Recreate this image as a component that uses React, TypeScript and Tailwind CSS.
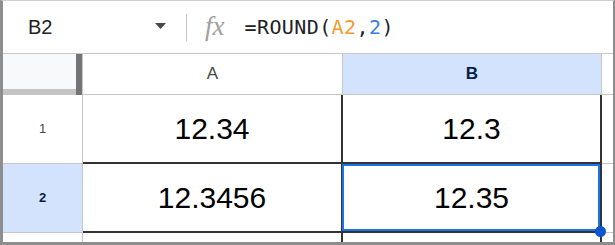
import React from 'react'

const FONT = { fontFamily: '"Liberation Sans", Arial, sans-serif' }

function FormulaBar() {
  return (
    <div className="flex h-[53px] items-center border-b border-[#c7c7c7] bg-white">
      <div className="flex w-[183px] items-center pl-[25px] pr-[20px]">
        <span className="text-[20px] leading-none text-[#202124]">B2</span>
        <svg className="ml-auto mt-[-3px]" width="11" height="6" viewBox="0 0 11 6">
          <path d="M0 0 L11 0 L5.5 6 Z" fill="#444746" />
        </svg>
      </div>
      <div className="h-[27px] w-px bg-[#c4c7c5]" />
      <span
        className="ml-[18px] mt-[-2px] text-[27px] italic leading-none text-[#a0a0a0]"
        style={{ fontFamily: '"Liberation Serif", "Times New Roman", serif' }}
      >
        fx
      </span>
      <span
        className="ml-[20px] text-[20px] leading-none tracking-[0.4px] text-[#202124]"
        style={{ fontFamily: '"DejaVu Sans Mono", monospace' }}
      >
        =ROUND(<span className="text-[#f29b2f]">A2</span>,<span className="text-[#3a7ee4]">2</span>)
      </span>
    </div>
  )
}

function HeaderRow() {
  return (
    <div className="flex h-[41px] border-b border-[#c7c7c7]">
      <div className="flex h-[41px] w-[80px] border-r border-[#c7c7c7]">
        <div className="flex flex-1 flex-col">
          <div className="flex-1 bg-[#f8f9fa]" />
          <div className="h-[6px] bg-[#c4c4c4]" />
        </div>
        <div className="w-[6px] bg-[#747474]" />
      </div>
      <div className="flex w-[260px] items-center justify-center border-r border-[#c7c7c7] text-[17px] text-[#444746]">
        A
      </div>
      <div className="flex w-[259px] items-center justify-center border-r border-[#c7c7c7] bg-[#d3e3fd] text-[17px] font-bold text-[#041e49]">
        B
      </div>
      <div className="flex-1" />
    </div>
  )
}

function DataRow({ num, a, b, selected }: { num: number; a: string; b: string; selected?: boolean }) {
  return (
    <div className="flex h-[69px]">
      <div
        className={
          selected
            ? 'flex w-[80px] items-center justify-center border-r border-b border-[#c7c7c7] bg-[#d3e3fd] text-[13px] font-bold text-[#041e49]'
            : 'flex w-[80px] items-center justify-center border-r border-b border-[#c7c7c7] text-[13px] text-[#444746]'
        }
      >
        {num}
      </div>
      <div className="flex w-[260px] items-center justify-center border-r-2 border-b-2 border-[#333333] text-[30px] text-black">
        {a}
      </div>
      <div className="relative flex w-[259px] items-center justify-center border-r-2 border-b-2 border-[#333333] text-[30px] text-black">
        {b}
        {selected && (
          <>
            <div className="absolute top-0 left-[-1px] right-0 bottom-0 border-2 border-[#1a73e8]" />
            <div className="absolute right-[-6px] bottom-[-6px] h-[11px] w-[11px] rounded-full bg-[#0b57d0]" />
          </>
        )}
      </div>
      <div className="flex-1 border-b border-[#c7c7c7]" />
    </div>
  )
}

export default function App() {
  return (
    <div
      className="h-[245px] w-[615px] overflow-hidden border-t border-l-[3px] border-r-2 border-b-[3px] border-[#8e8e8e] border-t-[#d0d0d0] bg-white"
      style={FONT}
    >
      <FormulaBar />
      <HeaderRow />
      <DataRow num={1} a="12.34" b="12.3" />
      <DataRow num={2} a="12.3456" b="12.35" selected />
      <div className="flex h-[9px]">
        <div className="w-[80px] border-r border-[#c7c7c7]" />
        <div className="w-[260px] border-r-2 border-[#333333]" />
        <div className="w-[259px] border-r-2 border-[#333333]" />
        <div className="flex-1" />
      </div>
    </div>
  )
}
